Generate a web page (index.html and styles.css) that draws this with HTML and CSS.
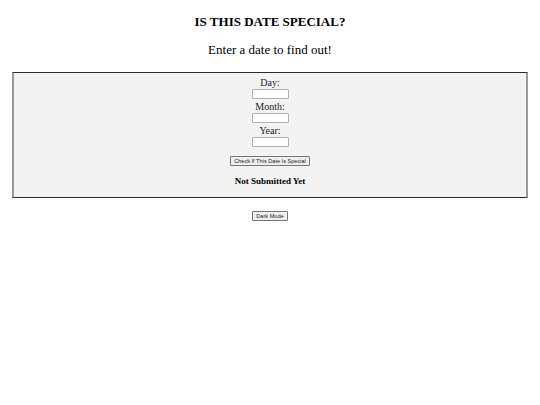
FILE: index.html
```html
<!DOCTYPE html>
<html>
<head>
<meta charset="utf-8">
<link rel="stylesheet" href="styles.css">
</head>
<body>
<h1 class="title">IS THIS DATE SPECIAL?</h1>
<p class="subtitle">Enter a date to find out!</p>
<form class="panel">
  <label class="lbl">Day:</label>
  <input class="field" type="text">
  <label class="lbl">Month:</label>
  <input class="field" type="text">
  <label class="lbl">Year:</label>
  <input class="field" type="text">
  <button class="btn check" type="button">Check If This Date Is Special</button>
  <div class="status">Not Submitted Yet</div>
</form>
<div class="footer">
  <button class="btn" type="button">Dark Mode</button>
</div>
</body>
</html>
```
FILE: styles.css
```css
html, body {
  margin: 0;
  padding: 0;
  background: #ffffff;
}
body {
  font-family: "Liberation Serif", "Times New Roman", serif;
  color: #000;
  padding: 0 12px;
}
.title {
  margin: 0;
  padding-top: 14px;
  font-size: 13px;
  line-height: 15px;
  font-weight: bold;
  text-align: center;
}
.subtitle {
  margin: 0;
  padding-top: 13px;
  font-size: 13px;
  line-height: 15px;
  text-align: center;
}
.panel {
  margin-top: 15px;
  background: #f3f3f3;
  border-top: 1px solid #2a2a2a;
  border-bottom: 1px solid #2a2a2a;
  border-left: 2px solid #9a9a9a;
  border-right: 2px solid #9a9a9a;
  display: flex;
  flex-direction: column;
  align-items: center;
  padding: 4px 0 10px;
}
.lbl {
  font-size: 10px;
  line-height: 12px;
  color: #222;
}
.field {
  box-sizing: border-box;
  width: 37px;
  height: 10px;
  margin: 0 0 2px;
  padding: 0;
  border: 1px solid #b0b0b0;
  border-radius: 1px;
  background: #fff;
}
.btn {
  font-family: "Liberation Sans", Arial, sans-serif;
  font-size: 5.6px;
  line-height: 6px;
  padding: 1px 3px;
  color: #222;
  background: #efefef;
  border: 1px solid #767676;
  border-radius: 1px;
}
.check {
  margin-top: 7px;
}
.status {
  margin-top: 10px;
  font-size: 9px;
  line-height: 11px;
  font-weight: bold;
}
.footer {
  display: flex;
  justify-content: center;
  padding-top: 13px;
}
```
